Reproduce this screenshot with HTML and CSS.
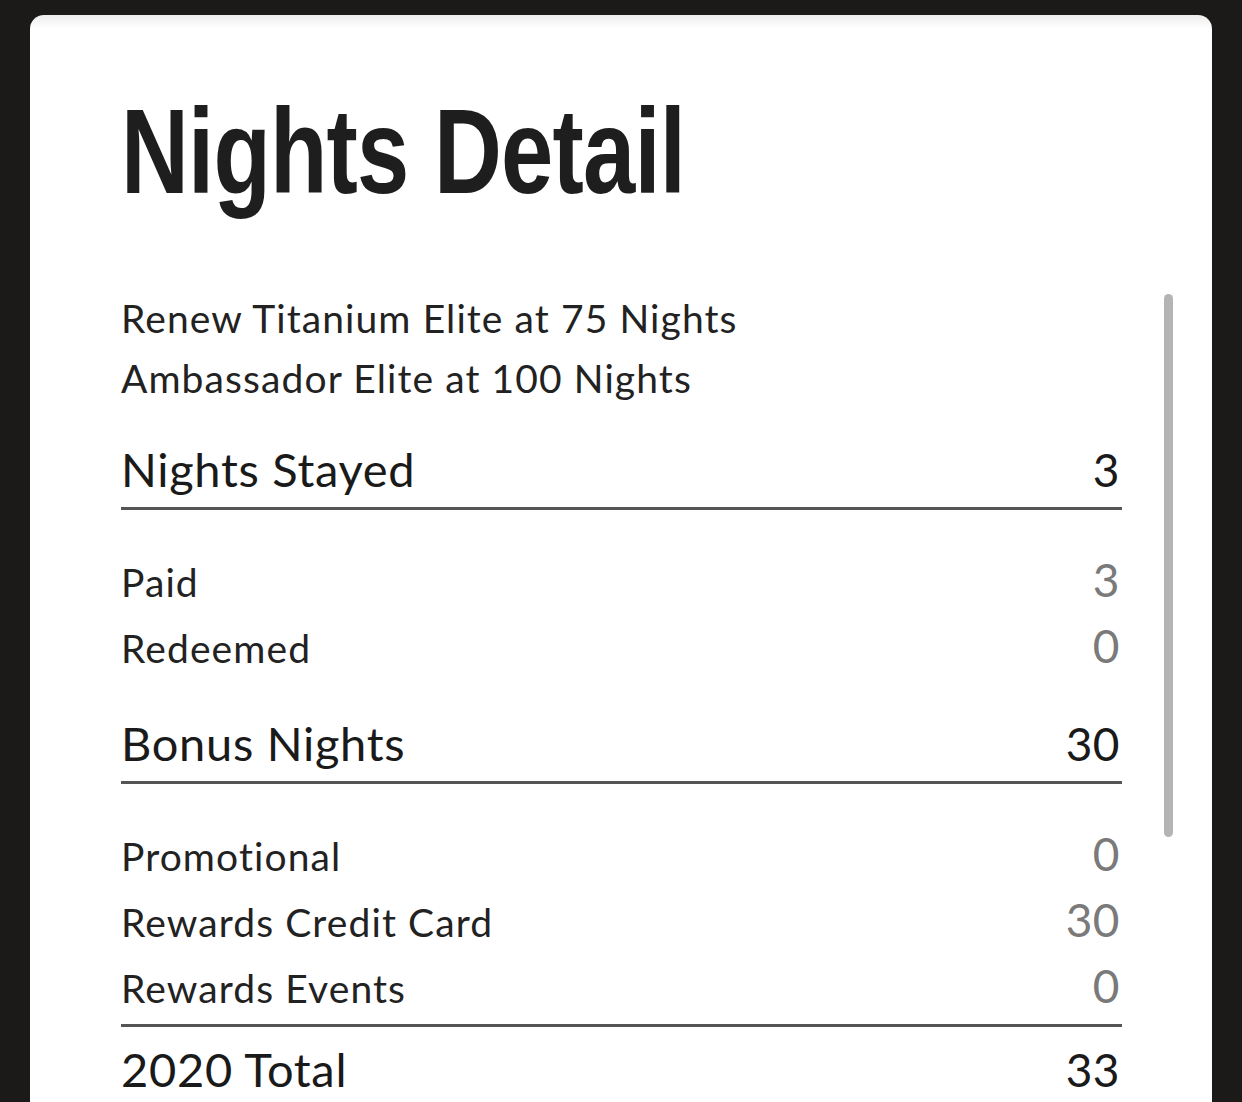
FILE: index.html
```html
<!DOCTYPE html>
<html lang="en">
<head>
<meta charset="utf-8">
<title>Nights Detail</title>
<link rel="stylesheet" href="styles.css">
</head>
<body>
<div class="card">
  <div class="content">
    <h1 class="title"><span class="title-text">Nights Detail</span></h1>
    <div class="intro">
      <div class="intro-line">Renew Titanium Elite at 75 Nights</div>
      <div class="intro-line">Ambassador Elite at 100 Nights</div>
    </div>
    <div class="section-head first">
      <span class="head-label">Nights Stayed</span>
      <span class="head-value">3</span>
    </div>
    <div class="items">
      <div class="item"><span class="item-label">Paid</span><span class="item-value">3</span></div>
      <div class="item"><span class="item-label">Redeemed</span><span class="item-value">0</span></div>
    </div>
    <div class="section-head">
      <span class="head-label">Bonus Nights</span>
      <span class="head-value">30</span>
    </div>
    <div class="items last">
      <div class="item"><span class="item-label">Promotional</span><span class="item-value">0</span></div>
      <div class="item"><span class="item-label">Rewards Credit Card</span><span class="item-value">30</span></div>
      <div class="item"><span class="item-label">Rewards Events</span><span class="item-value">0</span></div>
    </div>
    <div class="total">
      <span class="head-label">2020 Total</span>
      <span class="head-value">33</span>
    </div>
  </div>
  <div class="scrollbar"></div>
</div>
</body>
</html>
```

FILE: styles.css
```css
html, body {
  margin: 0;
  padding: 0;
  background: #1c1919;
  height: 100%;
  overflow: hidden;
}

.card {
  position: relative;
  margin: 15px 30px 0 30px;
  height: 1087px;
  background: #ffffff;
  border-radius: 14px 14px 0 0;
  overflow: hidden;
  background-image: linear-gradient(#ededed 0, #ffffff 14px);
}

.content {
  width: 1001px;
  padding: 76px 0 0 91px;
  font-family: "Lato", "Noto Sans", sans-serif;
  font-variant-ligatures: none;
  color: #222222;
}

.title {
  margin: 0;
  height: 120px;
  font-family: "Liberation Sans", "Arial", sans-serif;
  font-weight: 700;
  font-size: 120px;
  line-height: 120px;
  color: #1e1e1e;
  letter-spacing: -1px;
  white-space: nowrap;
}

.title-text {
  display: inline-block;
  transform: scaleX(0.783);
  transform-origin: 0 0;
}

.intro {
  margin-top: 77px;
}

.intro-line {
  font-size: 39px;
  line-height: 60px;
  height: 60px;
  letter-spacing: 1.1px;
}

.section-head,
.total {
  display: flex;
  justify-content: space-between;
  align-items: baseline;
  font-size: 47px;
  line-height: 56px;
  letter-spacing: 0.7px;
  color: #1a1a1a;
}

.section-head {
  border-bottom: 3px solid #555555;
  padding-bottom: 9px;
  margin-top: 34px;
}

.section-head.first {
  margin-top: 33px;
}

.head-value {
  font-size: 46px;
  letter-spacing: 0.5px;
  padding-right: 2px;
}

.items {
  padding-top: 39px;
  padding-bottom: 34px;
}

.items.last {
  padding-bottom: 3px;
  border-bottom: 3px solid #555555;
}

.items.last + .total {
  margin-top: 0;
}

.item {
  display: flex;
  justify-content: space-between;
  align-items: baseline;
  font-size: 39px;
  line-height: 66px;
  height: 66px;
  letter-spacing: 1.1px;
}

.item-value {
  font-size: 46px;
  line-height: 60px;
  letter-spacing: 0.5px;
  color: #7a7a7a;
  padding-right: 2px;
}

.total {
  padding-top: 14px;
}

.section-head + .items {
  margin-top: 0;
}

.items + .section-head {
  margin-top: 0;
}

.scrollbar {
  position: absolute;
  left: 1134px;
  top: 279px;
  width: 9px;
  height: 543px;
  border-radius: 5px;
  background: #b4b4b4;
}
```
